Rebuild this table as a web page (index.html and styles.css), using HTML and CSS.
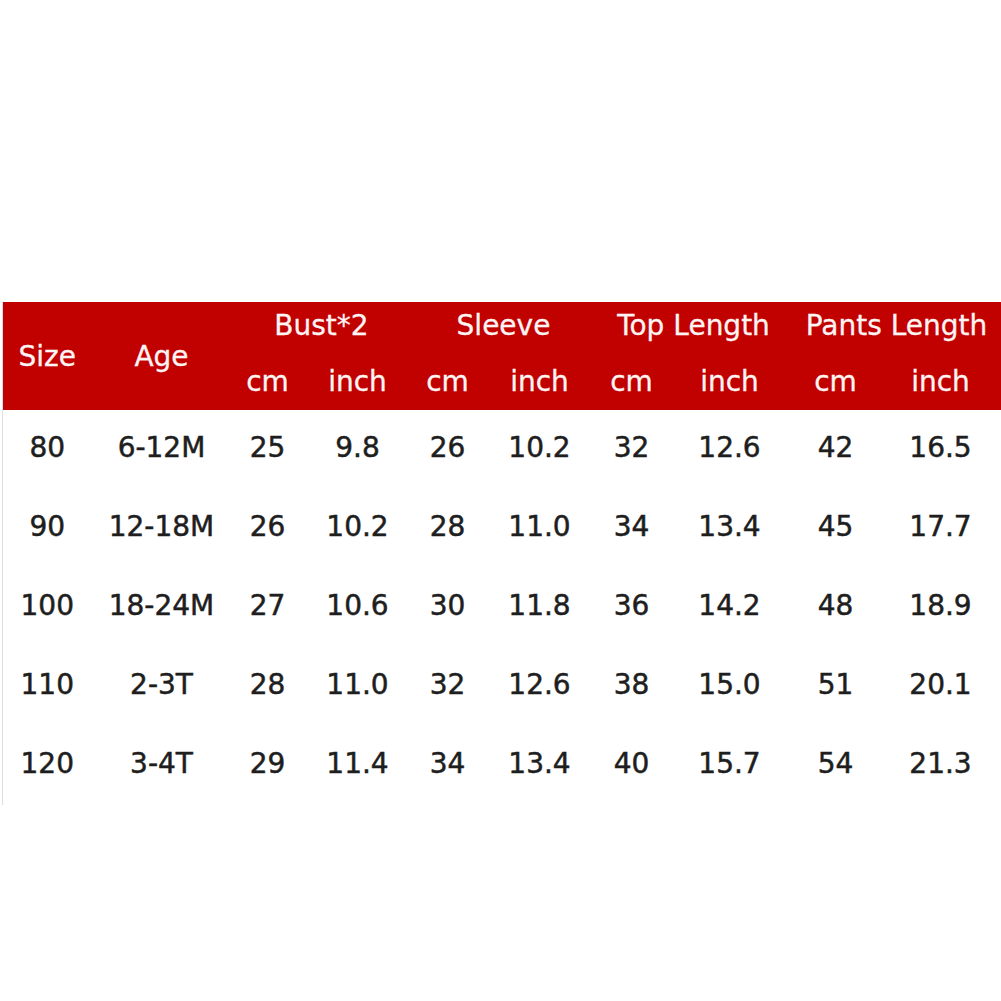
FILE: index.html
```html
<!DOCTYPE html>
<html>
<head>
<meta charset="utf-8">
<link rel="stylesheet" href="styles.css">
</head>
<body>
<div class="page">
  <table class="chart">
    <colgroup>
      <col class="c1"><col class="c2"><col class="c3"><col class="c4"><col class="c5">
      <col class="c6"><col class="c7"><col class="c8"><col class="c9"><col class="c10">
    </colgroup>
    <thead>
      <tr class="h1">
        <th rowspan="2" class="solo">Size</th>
        <th rowspan="2" class="solo">Age</th>
        <th colspan="2">Bust*2</th>
        <th colspan="2">Sleeve</th>
        <th colspan="2">Top Length</th>
        <th colspan="2">Pants Length</th>
      </tr>
      <tr class="h2">
        <th>cm</th><th>inch</th><th>cm</th><th>inch</th><th>cm</th><th>inch</th><th>cm</th><th>inch</th>
      </tr>
    </thead>
    <tbody>
      <tr><td>80</td><td>6-12M</td><td>25</td><td>9.8</td><td>26</td><td>10.2</td><td>32</td><td>12.6</td><td>42</td><td>16.5</td></tr>
      <tr><td>90</td><td>12-18M</td><td>26</td><td>10.2</td><td>28</td><td>11.0</td><td>34</td><td>13.4</td><td>45</td><td>17.7</td></tr>
      <tr><td>100</td><td>18-24M</td><td>27</td><td>10.6</td><td>30</td><td>11.8</td><td>36</td><td>14.2</td><td>48</td><td>18.9</td></tr>
      <tr><td>110</td><td>2-3T</td><td>28</td><td>11.0</td><td>32</td><td>12.6</td><td>38</td><td>15.0</td><td>51</td><td>20.1</td></tr>
      <tr><td>120</td><td>3-4T</td><td>29</td><td>11.4</td><td>34</td><td>13.4</td><td>40</td><td>15.7</td><td>54</td><td>21.3</td></tr>
    </tbody>
  </table>
</div>
</body>
</html>
```
FILE: styles.css
```css
html, body {
  margin: 0;
  padding: 0;
  background: #ffffff;
}
.page {
  width: 1001px;
  height: 1001px;
  padding-top: 302px;
  padding-left: 2px;
  box-sizing: border-box;
  overflow: hidden;
}
.chart {
  border-collapse: collapse;
  table-layout: fixed;
  width: 999px;
  font-family: "DejaVu Sans", "Liberation Sans", sans-serif;
  border-left: 1px solid #dcdce4;
}
.c1 { width: 89px; }
.c2 { width: 140px; }
.c3 { width: 72px; }
.c4 { width: 108px; }
.c5 { width: 72px; }
.c6 { width: 112px; }
.c7 { width: 72px; }
.c8 { width: 124px; }
.c9 { width: 88px; }
.c10 { width: 122px; }
.chart th {
  background: #c10000;
  color: #fff4f4;
  font-weight: normal;
  font-size: 28px;
  line-height: 33px;
  padding: 0;
  text-align: center;
  white-space: nowrap;
  -webkit-text-stroke: 0.3px #fff4f4;
}
.h1 th { height: 40px; vertical-align: bottom; padding-bottom: 2px; }
.h1 th.solo { vertical-align: middle; padding: 0; }
.h2 th { height: 58px; vertical-align: middle; padding-top: 8px; }
.chart td {
  height: 74px;
  padding: 0 0 5px 0;
  text-align: center;
  font-size: 28px;
  line-height: 33px;
  color: #1e1e1e;
  vertical-align: middle;
  white-space: nowrap;
  -webkit-text-stroke: 0.5px #1e1e1e;
}
```
